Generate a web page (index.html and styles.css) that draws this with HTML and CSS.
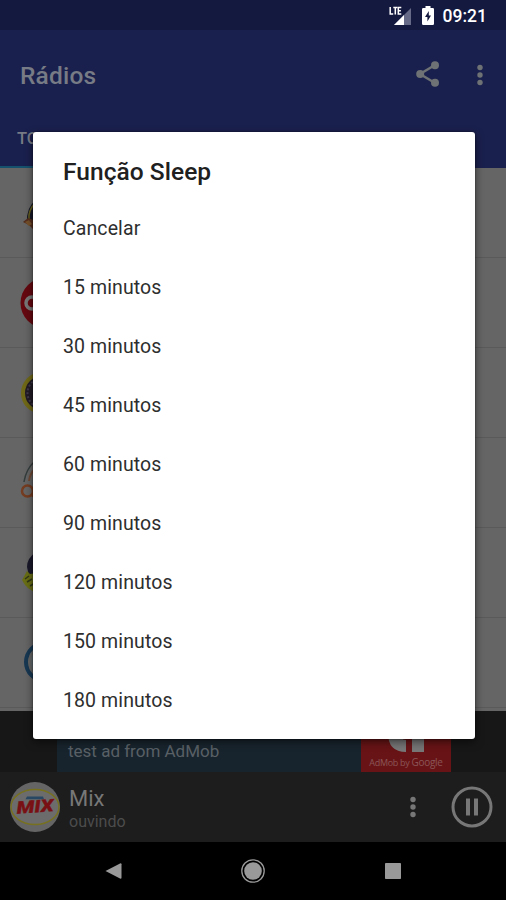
FILE: index.html
```html
<!DOCTYPE html>
<html lang="pt">
<head>
<meta charset="utf-8">
<title>Rádios</title>
<link rel="stylesheet" href="styles.css">
</head>
<body>
<div class="screen">
  <div class="status">
    <svg class="signal" width="24" height="20" viewBox="0 0 24 20"><path d="M22 2V19H5Z" fill="#666a86"/><path d="M15 9V19H5Z" fill="#fff"/><path d="M1.200 1v7h3M4.300 1.500h4M6.300 1.500v7M12.300 1.500h-3v6.500h3M9.300 4.700h2.600" fill="none" stroke="#fff" stroke-width="1.500"/></svg>
    <svg class="battery" width="12" height="20" viewBox="0 0 12 20"><path d="M3.500 0h5v2h2.300q1.200 0 1.200 1.200v14.600q0 1.200-1.200 1.200H1.200Q0 19 0 17.800V3.200Q0 2 1.200 2h2.300Z" fill="#fff"/><path d="M6.800 5 3 11h2.400v4.500L9 9.600H6.800Z" fill="#14193f"/></svg>
    <span class="clock">09:21</span>
  </div>
  <header class="appbar">
    <h1>Rádios</h1>
    <svg class="share" width="24" height="26" viewBox="0 0 24 26"><path d="M19 4 4 13l15 9" fill="none" stroke="#6e7274" stroke-width="2.500"/><g fill="#6e7274"><circle cx="19" cy="4.200" r="4"/><circle cx="4.200" cy="13" r="4"/><circle cx="19" cy="21.800" r="4"/></g></svg>
    <svg class="more" width="6" height="22" viewBox="0 0 6 22" fill="#6e7274"><circle cx="3" cy="3.500" r="2.700"/><circle cx="3" cy="11" r="2.700"/><circle cx="3" cy="18.500" r="2.700"/></svg>
  </header>
  <nav class="tabs"><span>TODAS</span></nav>
  <main class="list">
    <div class="row"><svg width="52" height="52" viewBox="0 0 52 52"><path d="M16 13Q6 20 7 36l8 6V13Z" fill="#171827"/><path d="M15 16Q8 24 9 32l8 9" fill="none" stroke="#67601c" stroke-width="1.500"/><path d="M3 35l5-4 8 3v11l-7-7Z" fill="#542d1c"/><path d="M5 35l4-2 3 4-3 2Z" fill="#75512b"/></svg></div>
    <div class="row"><svg width="52" height="52" viewBox="0 0 52 52"><circle cx="26" cy="26" r="25.500" fill="#650810"/><circle cx="12" cy="26" r="6" fill="none" stroke="#777" stroke-width="3.500"/></svg></div>
    <div class="row"><svg width="52" height="52" viewBox="0 0 52 52"><circle cx="22" cy="26" r="19" fill="#211a25" stroke="#6f6817" stroke-width="4"/><circle cx="22" cy="26" r="14.500" fill="none" stroke="#41394b" stroke-width="2" stroke-dasharray="2 2"/></svg></div>
    <div class="row"><svg width="52" height="52" viewBox="0 0 52 52"><path d="M4 25Q6 12 15 4" fill="none" stroke="#343c3c" stroke-width="1.500"/><path d="M9 24Q10 16 15 12" fill="none" stroke="#6f4934" stroke-width="2"/><circle cx="7.500" cy="34" r="5.500" fill="none" stroke="#743c20" stroke-width="2.500"/><path d="M11 38l4 2" stroke="#743c20" stroke-width="2"/></svg></div>
    <div class="row"><svg width="52" height="52" viewBox="0 0 52 52"><path d="M16 5Q7 11 7 20l2 9h8Z" fill="#19182a"/><path d="M2 33l5-9 3 3 6-1v19q-9-2-14-12Z" fill="#686e15"/><path d="m5 32 4-3m-2 6 5-3m-2 7 5-3" stroke="#303617" stroke-width="1.500"/></svg></div>
    <div class="row"><svg width="52" height="52" viewBox="0 0 52 52"><circle cx="25" cy="25" r="19" fill="none" stroke="#173752" stroke-width="4"/><circle cx="25" cy="25" r="13" fill="#171d39" stroke="#626b70" stroke-width="2"/></svg></div>
  </main>
  <div class="adzone">
    <div class="ad">
      <div class="adtext">Congratulations, big<br>test ad from AdMob</div>
      <div class="adlogo">
        <svg width="40" height="36" viewBox="0 0 40 36" fill="#777"><path d="M2 16Q2 35 20 35V23Q14 23 14 16ZM26 15h12v20H26Z"/></svg>
        <small>AdMob by <b>Google</b></small>
      </div>
    </div>
  </div>
  <section class="player">
    <svg class="cover" width="50" height="50" viewBox="0 0 50 50"><circle cx="25" cy="25" r="25" fill="#656565"/><ellipse cx="25" cy="25" rx="24" ry="17.500" fill="#6c6c6c" stroke="#77711f" stroke-width="1.400"/><path d="M17 14.500h16l1 2.800H15.500Z" fill="#274763"/><g transform="rotate(-4 25 25)"><text x="25" y="30.500" text-anchor="middle" textLength="37" lengthAdjust="spacingAndGlyphs" class="mix">MIX</text></g></svg>
    <div class="track"><div class="name">Mix</div><div class="state">ouvindo</div></div>
    <svg class="pmore" width="6" height="22" viewBox="0 0 6 22" fill="#777"><circle cx="3" cy="3.500" r="2.700"/><circle cx="3" cy="11" r="2.700"/><circle cx="3" cy="18.500" r="2.700"/></svg>
    <svg class="pause" width="42" height="42" viewBox="0 0 42 42"><circle cx="21" cy="21" r="19" fill="none" stroke="#777" stroke-width="3"/><path d="M15 12.500h4v17h-4zM23 12.500h4v17h-4z" fill="#777"/></svg>
  </section>
  <footer class="navbar">
    <svg width="24" height="24" viewBox="0 0 24 24"><path d="M4.500 12 19.500 4.200q1 0 1 1v13.600q0 1-1 1Z" fill="#999"/></svg>
    <svg width="24" height="24" viewBox="0 0 24 24"><circle cx="12" cy="12" r="11.200" fill="none" stroke="#999" stroke-width="1.300"/><circle cx="12" cy="12" r="8.800" fill="#999"/></svg>
    <svg width="24" height="24" viewBox="0 0 24 24"><rect x="4" y="4" width="16" height="16" rx=".8" fill="#999"/></svg>
  </footer>
  <div class="dialog" role="dialog">
    <h2>Função Sleep</h2>
    <ul>
      <li>Cancelar</li><li>15 minutos</li><li>30 minutos</li><li>45 minutos</li><li>60 minutos</li><li>90 minutos</li><li>120 minutos</li><li>150 minutos</li><li>180 minutos</li>
    </ul>
  </div>
</div>
</body>
</html>
```
FILE: styles.css
```css
* { box-sizing: border-box; margin: 0; padding: 0; }
body { font-family: Roboto, "Liberation Sans", sans-serif; background: #000; }
svg { display: block; flex: none; }
.screen { position: relative; width: 506px; height: 900px; overflow: hidden; display: flex; flex-direction: column; }
.status { height: 30px; background: #14193f; display: flex; align-items: center; justify-content: flex-end; padding-right: 19px; color: #fff; }
.signal { margin-top: 1px; }
.battery { margin: 1px 9px 0 9px; }
.clock { font-size: 17.5px; font-weight: 500; line-height: 30px; padding-top: 2px; }
.appbar { height: 88px; background: #1a204d; display: flex; align-items: center; padding: 0 23px 0 20px; }
.appbar h1 { flex: 1; font-size: 24.5px; font-weight: 500; color: #777b85; letter-spacing: .2px; padding-top: 3px; }
.share { margin-right: 37px; }
.more { margin-top: 1px; }
.tabs { height: 50px; background: #1a204d; display: flex; color: #777b85; font-size: 16.5px; font-weight: 500; line-height: 20px; }
.tabs span { padding: 11px 17px 0; border-bottom: 2px solid #15516d; }
.list { height: 543px; background: #656565; display: grid; grid-template-rows: repeat(6, 90px); overflow: hidden; }
.row { border-bottom: 1px solid #5a5a5a; padding: 19px 0 0 20px; }
.adzone { height: 61px; background: #171717; display: flex; justify-content: center; padding-left: 2px; }
.ad { width: 394px; display: flex; background: #18242d; }
.adtext { flex: 1; padding: 6px 0 0 11px; color: #596066; font-size: 17px; line-height: 23px; }
.adlogo { width: 90px; background: #681416; display: flex; flex-direction: column; align-items: center; color: #8b5557; padding-top: 6px; }
.adlogo small { font: 9px/18px "Open Sans", sans-serif; white-space: nowrap; letter-spacing: -.3px; }
.adlogo b { font-weight: 400; font-size: 10px; }
.player { height: 70px; background: #1d1d1d; display: flex; align-items: center; padding: 0 13px 0 10px; }
.mix { font: italic 900 17px Roboto, sans-serif; fill: #781014; stroke: #781014; stroke-width: .3px; }
.track { flex: 1; padding: 4px 0 0 9px; }
.name { font-size: 22px; line-height: 26px; color: #777; }
.state { font-size: 16px; line-height: 20px; color: #4c4c4c; }
.pmore { margin-right: 35px; }
.navbar { height: 58px; background: #000; display: flex; justify-content: center; gap: 116px; padding-top: 17px; }
.dialog { position: absolute; left: 33px; top: 132px; width: 442px; height: 607px; background: #fff; border-radius: 3px; padding: 24px 30px; box-shadow: 0 3px 9px rgba(0,0,0,.5), 0 0 2px rgba(0,0,0,.5); }
.dialog h2 { font-size: 24.5px; line-height: 32px; font-weight: 500; color: #202020; letter-spacing: .05px; }
.dialog ul { list-style: none; padding-top: 11px; }
.dialog li { height: 59px; line-height: 60px; font-size: 19.5px; color: #2e2e2e; letter-spacing: .1px; }
```
